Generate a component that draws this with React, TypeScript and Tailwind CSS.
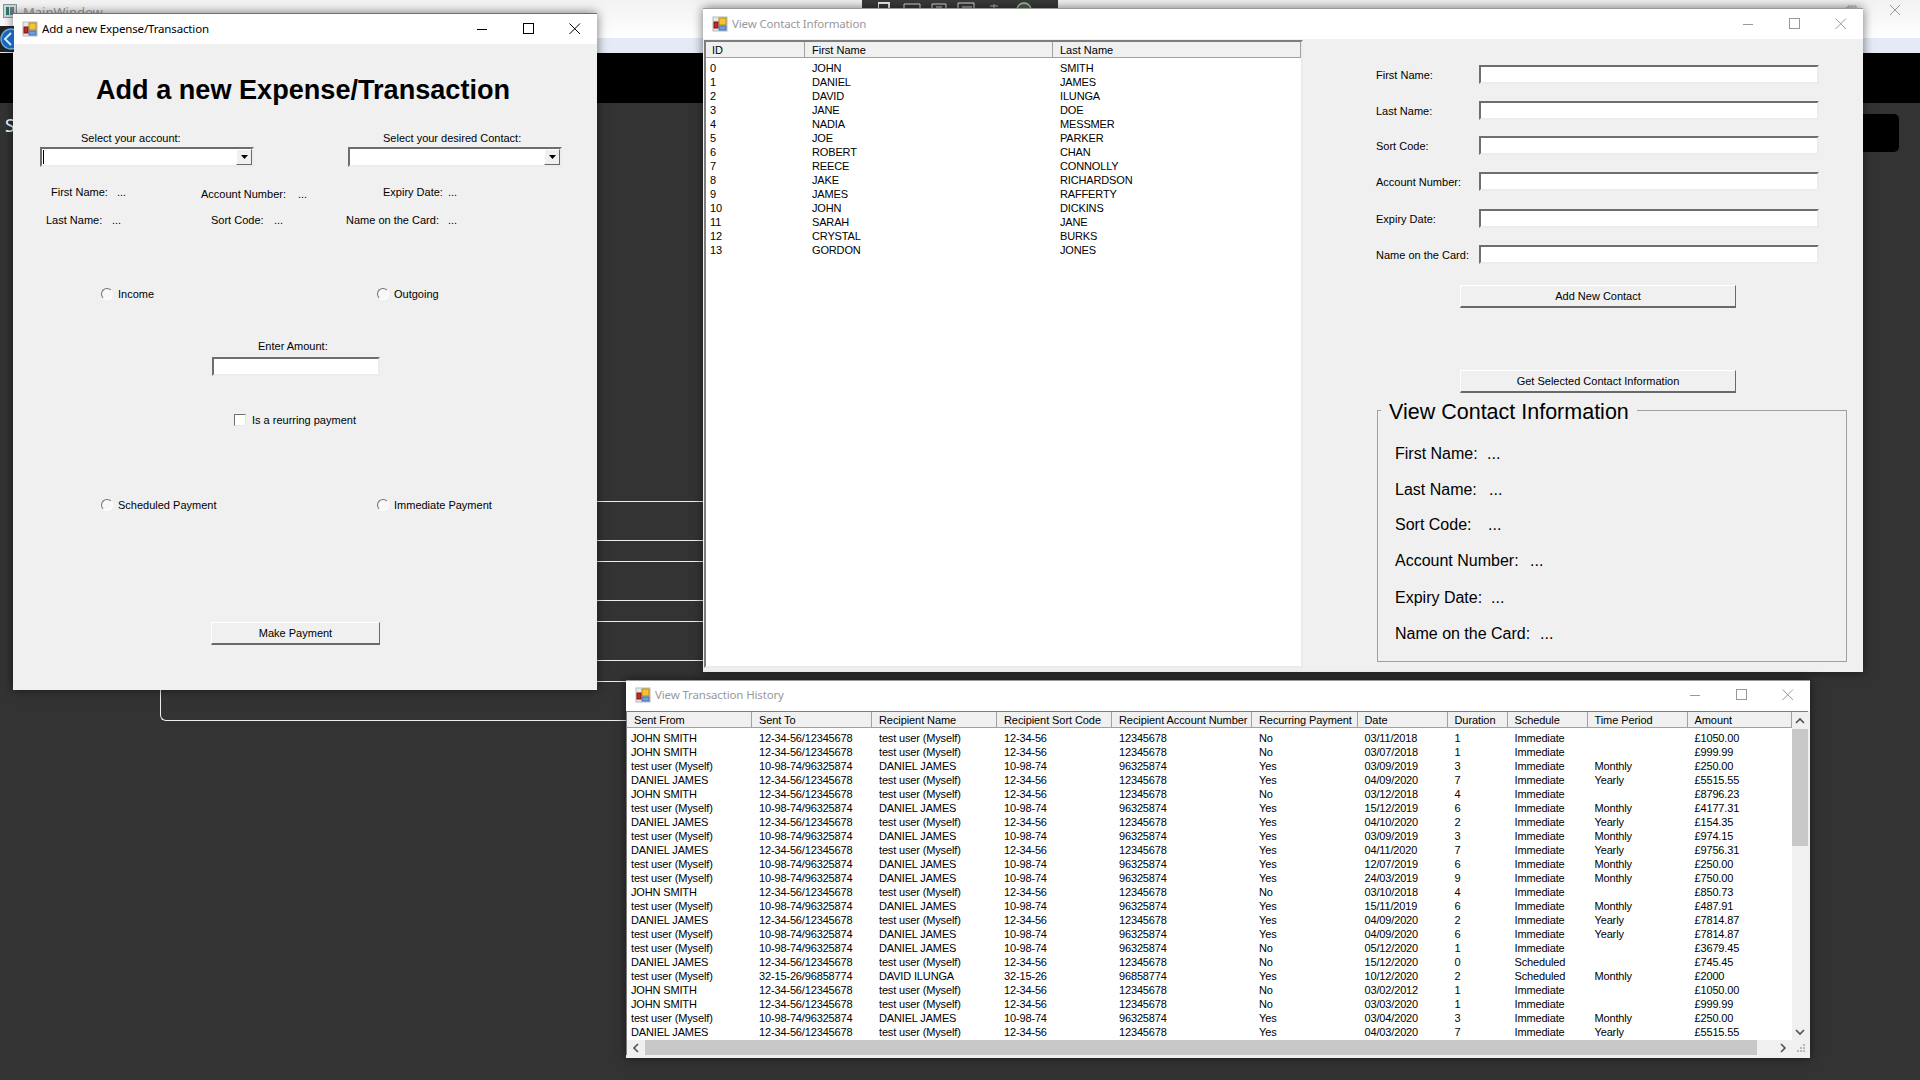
import React from "react";

const Rows: string[][] = [
  ["J", "No", "03/11/2018", "1", "Immediate", "", "£1050.00"],
  ["J", "No", "03/07/2018", "1", "Immediate", "", "£999.99"],
  ["T", "Yes", "03/09/2019", "3", "Immediate", "Monthly", "£250.00"],
  ["D", "Yes", "04/09/2020", "7", "Immediate", "Yearly", "£5515.55"],
  ["J", "No", "03/12/2018", "4", "Immediate", "", "£8796.23"],
  ["T", "Yes", "15/12/2019", "6", "Immediate", "Monthly", "£4177.31"],
  ["D", "Yes", "04/10/2020", "2", "Immediate", "Yearly", "£154.35"],
  ["T", "Yes", "03/09/2019", "3", "Immediate", "Monthly", "£974.15"],
  ["D", "Yes", "04/11/2020", "7", "Immediate", "Yearly", "£9756.31"],
  ["T", "Yes", "12/07/2019", "6", "Immediate", "Monthly", "£250.00"],
  ["T", "Yes", "24/03/2019", "9", "Immediate", "Monthly", "£750.00"],
  ["J", "No", "03/10/2018", "4", "Immediate", "", "£850.73"],
  ["T", "Yes", "15/11/2019", "6", "Immediate", "Monthly", "£487.91"],
  ["D", "Yes", "04/09/2020", "2", "Immediate", "Yearly", "£7814.87"],
  ["T", "Yes", "04/09/2020", "6", "Immediate", "Yearly", "£7814.87"],
  ["T", "No", "05/12/2020", "1", "Immediate", "", "£3679.45"],
  ["D", "No", "15/12/2020", "0", "Scheduled", "", "£745.45"],
  ["I", "Yes", "10/12/2020", "2", "Scheduled", "Monthly", "£2000"],
  ["J", "No", "03/02/2012", "1", "Immediate", "", "£1050.00"],
  ["J", "No", "03/03/2020", "1", "Immediate", "", "£999.99"],
  ["T", "Yes", "03/04/2020", "3", "Immediate", "Monthly", "£250.00"],
  ["D", "Yes", "04/03/2020", "7", "Immediate", "Yearly", "£5515.55"],
];

const lead: Record<string, string[]> = {
  J: ["JOHN SMITH", "12-34-56/12345678", "test user (Myself)", "12-34-56", "12345678"],
  D: ["DANIEL JAMES", "12-34-56/12345678", "test user (Myself)", "12-34-56", "12345678"],
  T: ["test user (Myself)", "10-98-74/96325874", "DANIEL JAMES", "10-98-74", "96325874"],
  I: ["test user (Myself)", "32-15-26/96858774", "DAVID ILUNGA", "32-15-26", "96858774"],
};

const contacts: [string, string, string][] = [
  ["0", "JOHN", "SMITH"], ["1", "DANIEL", "JAMES"], ["2", "DAVID", "ILUNGA"], ["3", "JANE", "DOE"],
  ["4", "NADIA", "MESSMER"], ["5", "JOE", "PARKER"], ["6", "ROBERT", "CHAN"], ["7", "REECE", "CONNOLLY"],
  ["8", "JAKE", "RICHARDSON"], ["9", "JAMES", "RAFFERTY"], ["10", "JOHN", "DICKINS"], ["11", "SARAH", "JANE"],
  ["12", "CRYSTAL", "BURKS"], ["13", "GORDON", "JONES"],
];

const txGrid = "grid grid-cols-[125px_120px_125px_115px_140px_105.5px_90px_60px_80px_100px_104.5px]";
const ctGrid = "grid grid-cols-[99px_248px_248px]";

function AppIcon() {
  return (
    <svg width="16" height="16" viewBox="0 0 16 16" className="shrink-0">
      <rect x="1" y="1" width="14" height="14" fill="#e8e8e8" stroke="#b8b8b8" />
      <rect x="7" y="2" width="7" height="7" fill="#f6c431" stroke="#b98a10" />
      <rect x="2" y="6" width="4" height="6" fill="#c8281e" stroke="#7a1410" />
      <rect x="7" y="10" width="7" height="4" fill="#6f9fe0" stroke="#3f6fb0" />
    </svg>
  );
}

function Caption({ color }: { color: string }) {
  return (
    <div className="ml-auto flex items-center">
      <svg width="46" height="12" viewBox="0 0 46 12" className="shrink-0">
        <line x1="0" y1="6.5" x2="10" y2="6.5" stroke={color} />
      </svg>
      <svg width="46" height="12" viewBox="0 0 46 12" className="shrink-0">
        <rect x="0.5" y="0.5" width="10" height="10" fill="none" stroke={color} />
      </svg>
      <svg width="18" height="12" viewBox="0 0 18 12" className="shrink-0">
        <path d="M0.5 0.5 L11 11 M11 0.5 L0.5 11" fill="none" stroke={color} />
      </svg>
    </div>
  );
}

function Sunken({ className }: { className: string }) {
  return (
    <div className={"h-[19px] bg-white border-2 border-t-[#6e6e6e] border-l-[#6e6e6e] border-r-[#ececec] border-b-[#ececec] " + className} />
  );
}

function Combo({ className, caret }: { className: string; caret?: boolean }) {
  return (
    <div className={"h-[20px] w-[214px] flex bg-white border-2 border-t-[#6e6e6e] border-l-[#6e6e6e] border-r-[#ececec] border-b-[#ececec] " + className}>
      <div className="flex-1 pl-[1px] pt-[1px]">{caret && <div className="w-px h-[14px] bg-black" />}</div>
      <div className="w-[16px] bg-[#f0f0f0] flex items-center justify-center border border-t-white border-l-white border-r-[#696969] border-b-[#696969]">
        <svg width="7" height="4" viewBox="0 0 7 4"><path d="M0 0 H7 L3.5 4 Z" fill="#000" /></svg>
      </div>
    </div>
  );
}

function Btn({ className, children }: { className: string; children: React.ReactNode }) {
  return (
    <div className={"h-[23px] bg-[#f0f0f0] flex items-center justify-center text-black border-t border-l border-t-white border-l-white border-r border-r-[#696969] border-b-2 border-b-[#696969] " + className}>
      {children}
    </div>
  );
}

function Radio({ label, className }: { label: string; className: string }) {
  return (
    <div className={"flex items-center " + className}>
      <span className="w-[12px] h-[12px] rounded-full bg-[#f8f8f8] border border-t-[#707070] border-l-[#707070] border-r-white border-b-white -mt-[1px]" />
      <span className="ml-[5px]">{label}</span>
    </div>
  );
}

function Win({ className, title, active, barClass, children }: { className: string; title: string; active?: boolean; barClass?: string; children: React.ReactNode }) {
  const color = active ? "#000000" : "#999999";
  return (
    <div className={"absolute flex flex-col bg-[#f0f0f0] shadow-[0_0_10px_rgba(0,0,0,0.55)] " + className}>
      <div className={"h-[31px] shrink-0 bg-white flex items-center pl-[9px] pr-[10px] border-t " + (active ? "border-t-[#6f6f6f] " : "border-t-[#9a9a9a] ") + (barClass ?? "")}>
        <AppIcon />
        <span className={"ml-[4px] font-['Noto_Sans',sans-serif] text-[11.5px] tracking-[-0.15px] " + (active ? "text-black" : "text-[#999999]")}>{title}</span>
        <Caption color={color} />
      </div>
      {children}
    </div>
  );
}

function Chevron({ d }: { d: string }) {
  return (
    <svg width="10" height="10" viewBox="0 0 10 10"><path d={d} fill="none" stroke="#505050" strokeWidth="1.6" /></svg>
  );
}

export default function App() {
  return (
    <div className="relative w-[1920px] h-[1080px] overflow-hidden flex flex-col bg-[#333333] font-['Liberation_Sans',Arial,sans-serif] text-[11px] leading-[14px] text-black">
      {/* main window behind */}
      <div className="h-[38px] bg-gradient-to-b from-[#f2f2f2] to-white flex items-start relative shrink-0">
        <svg width="14" height="14" viewBox="0 0 14 14" className="ml-[3px] mt-[4px]">
          <rect x="0.5" y="0.5" width="13" height="13" fill="#cdd6da" stroke="#8a9296" />
          <rect x="3" y="3" width="3" height="8" fill="#2c7a6a" />
          <rect x="7" y="3" width="4" height="8" fill="#6a7a88" />
        </svg>
        <span className="ml-[6px] mt-[5px] text-[13px] leading-[14px] text-[#9a9a9a] font-['Noto_Sans',sans-serif]">MainWindow</span>
        <div className="absolute left-[862px] top-0 w-[196px] h-[8px] bg-[#3a3a3a] flex items-start pl-[16px] overflow-hidden">
          <svg width="170" height="8" viewBox="0 0 170 8">
            <path d="M0 3 H11 V8 M0 3 V8" fill="none" stroke="#eee" strokeWidth="2" />
            <path d="M26 4 H42 V8 M26 4 V8 M54 4 H68 V8 M54 4 V8 M58 7 H64 M80 3 H96 M84 7 H94 M80 3 V8 M96 3 V8" fill="none" stroke="#ddd" />
            <path d="M112 6 H120 M116 4 V8" fill="none" stroke="#bbb" />
            <circle cx="146" cy="10" r="7" fill="#5a5a5a" stroke="#9ccf9c" strokeWidth="1.5" />
          </svg>
        </div>
        <svg width="12" height="12" viewBox="0 0 12 12" className="absolute left-[1845px] top-[5px]">
          <path d="M3 3 V1 H11 V9 H9" fill="none" stroke="#aaa" />
          <rect x="1" y="3" width="8" height="8" fill="none" stroke="#aaa" />
        </svg>
        <svg width="12" height="12" viewBox="0 0 12 12" className="absolute left-[1889px] top-[4px]">
          <path d="M1 1 L11 11 M11 1 L1 11" fill="none" stroke="#999" />
        </svg>
        <svg width="14" height="26" viewBox="0 0 14 26" className="absolute left-0 top-[26px] z-10">
          <rect width="14" height="26" fill="#222" />
          <circle cx="11" cy="13" r="10" fill="#1765b8" stroke="#6aa8e0" strokeWidth="1.5" />
          <path d="M11 7 L5 13 L11 19" fill="none" stroke="#cfe6ff" strokeWidth="2" />
        </svg>
      </div>
      <div className="h-[15px] shrink-0 bg-[#e4eaf6]" />
      <div className="h-[50px] shrink-0 bg-black" />
      <div className="flex-1 flex flex-col">
        <div className="flex items-start justify-between mt-[10px] pl-[5px] pr-[21px]">
          <span className="text-white text-[18px] leading-[24px] font-['Noto_Sans',sans-serif]">S</span>
          <div className="w-[700px] h-[38px] mt-px bg-black rounded-[5px]" />
        </div>
        <div className="ml-[160px] mt-[349px] w-[543px] border-l border-b border-[#eeeeee] rounded-bl-[6px] flex flex-col">
          <div className="h-[39px] border-t border-[#eeeeee]" />
          <div className="h-[21px] border-t border-[#eeeeee]" />
          <div className="h-[39px] border-t border-[#eeeeee]" />
          <div className="h-[21px] border-t border-[#eeeeee]" />
          <div className="h-[39px] border-t border-[#eeeeee]" />
          <div className="h-[21px] border-t border-[#eeeeee]" />
          <div className="h-[39px] border-t border-[#eeeeee]" />
        </div>
      </div>

      {/* View Contact Information */}
      <Win className="left-[703px] top-[8px] w-[1160px] h-[664px]" title="View Contact Information">
        <div className="flex-1 flex">
          <div className="ml-[1px] mt-px w-[599px] h-[628px] bg-white border-2 border-t-[#7d7d7d] border-l-[#7d7d7d] border-r-[#ececec] border-b-[#ececec]">
            <div className={ctGrid + " h-[16px] bg-[#f0f0f0]"}>
              {["ID", "First Name", "Last Name"].map((h, i) => (
                <div key={h} className={"pt-px border-r border-b border-[#a0a0a0] " + (i === 0 ? "pl-[6px]" : "pl-[7px]")}>{h}</div>
              ))}
            </div>
            <div className="pt-[3px] tracking-[-0.15px]">
              {contacts.map((r) => (
                <div key={r[0]} className={ctGrid + " h-[14px]"}>
                  <div className="pl-[4px]">{r[0]}</div>
                  <div className="pl-[7px]">{r[1]}</div>
                  <div className="pl-[7px]">{r[2]}</div>
                </div>
              ))}
            </div>
          </div>
          <div className="flex-1 flex flex-col">
            <div className="h-[26px]" />
            {[
              ["First Name:", "mb-[17px]"],
              ["Last Name:", "mb-[16px]"],
              ["Sort Code:", "mb-[17px]"],
              ["Account Number:", "mb-[18px]"],
              ["Expiry Date:", "mb-[17px]"],
              ["Name on the Card:", "mb-[21px]"],
            ].map(([l, m]) => (
              <div key={l} className={"flex items-center h-[19px] pl-[73px] " + m}>
                <span className="w-[103px]">{l}</span>
                <Sunken className="w-[340px]" />
              </div>
            ))}
            <Btn className="ml-[157px] w-[276px]">Add New Contact</Btn>
            <Btn className="ml-[157px] w-[276px] mt-[62px]">Get Selected Contact Information</Btn>
            <div className="relative ml-[74px] mt-[17px] w-[470px] h-[252px] border border-[#a0a0a0] pt-[33px] pl-[17px] text-[16px] leading-[20px]">
              <span className="absolute left-[3px] -top-[11px] bg-[#f0f0f0] px-[8px] text-[21.5px] leading-[24px] text-black">View Contact Information</span>
              <div className="flex h-[20px] mb-[16px]"><span className="w-[92px]">First Name:</span><span>...</span></div>
              <div className="flex h-[20px] mb-[15px]"><span className="w-[94px]">Last Name:</span><span>...</span></div>
              <div className="flex h-[20px] mb-[16px]"><span className="w-[93px]">Sort Code:</span><span>...</span></div>
              <div className="flex h-[20px] mb-[17px]"><span className="w-[135px]">Account Number:</span><span>...</span></div>
              <div className="flex h-[20px] mb-[16px]"><span className="w-[96px]">Expiry Date:</span><span>...</span></div>
              <div className="flex h-[20px]"><span className="w-[145px]">Name on the Card:</span><span>...</span></div>
            </div>
          </div>
        </div>
      </Win>

      {/* View Transaction History */}
      <Win className="left-[626px] top-[680px] w-[1184px] h-[378px]" title="View Transaction History" barClass="pb-[2px]">
        <div className="mr-[2px] h-[344px] bg-white border-t border-l border-t-[#7d7d7d] border-l-[#7d7d7d] grid grid-cols-[1165px_16px] grid-rows-[1fr_15px]">
          <div className="overflow-hidden">
            <div className={txGrid + " h-[16px] bg-[#f0f0f0]"}>
              {["Sent From", "Sent To", "Recipient Name", "Recipient Sort Code", "Recipient Account Number", "Recurring Payment", "Date", "Duration", "Schedule", "Time Period", "Amount"].map((h) => (
                <div key={h} className="pt-px pl-[7px] border-r border-b border-[#a0a0a0] whitespace-nowrap overflow-hidden tracking-[-0.08px]">{h}</div>
              ))}
            </div>
            <div className="pt-[3px] tracking-[-0.15px]">
              {Rows.map((r, i) => {
                const cells = [...lead[r[0]], ...r.slice(1)];
                return (
                  <div key={i} className={txGrid + " h-[14px]"}>
                    {cells.map((c, j) => (
                      <div key={j} className={"whitespace-nowrap " + (j === 0 ? "pl-[4px]" : "pl-[7px]")}>{c}</div>
                    ))}
                  </div>
                );
              })}
            </div>
          </div>
          <div className="bg-[#f0f0f0] flex flex-col items-center">
            <div className="h-[17px] flex items-center"><Chevron d="M1 7 L5 3 L9 7" /></div>
            <div className="w-full h-[117px] bg-[#c8c8c8]" />
            <div className="mt-auto h-[17px] flex items-center"><Chevron d="M1 3 L5 7 L9 3" /></div>
          </div>
          <div className="bg-[#f0f0f0] flex items-center">
            <div className="w-[18px] flex justify-center"><Chevron d="M7 1 L3 5 L7 9" /></div>
            <div className="w-[1112px] h-full bg-[#c8c8c8]" />
            <div className="flex-1 flex justify-end pr-[4px]"><Chevron d="M3 1 L7 5 L3 9" /></div>
          </div>
          <div className="bg-[#f0f0f0] flex items-end justify-end p-[2px]">
            <svg width="9" height="9" viewBox="0 0 9 9" fill="#b8b8b8">
              <rect x="6" y="0" width="2" height="2" /><rect x="3" y="3" width="2" height="2" /><rect x="6" y="3" width="2" height="2" />
              <rect x="0" y="6" width="2" height="2" /><rect x="3" y="6" width="2" height="2" /><rect x="6" y="6" width="2" height="2" />
            </svg>
          </div>
        </div>
      </Win>

      {/* Add a new Expense/Transaction */}
      <Win className="left-[13px] top-[13px] w-[584px] h-[677px]" title="Add a new Expense/Transaction" active>
        <div className="flex flex-col">
          <h1 className="mt-[30px] ml-[83px] h-[32px] text-[27.1px] leading-[32px] font-bold text-black whitespace-nowrap">Add a new Expense/Transaction</h1>
          <div className="flex mt-[25px] pl-[68px]">
            <span className="w-[302px]">Select your account:</span>
            <span>Select your desired Contact:</span>
          </div>
          <div className="flex mt-[2px]">
            <Combo className="ml-[27px]" caret />
            <Combo className="ml-[94px]" />
          </div>
          <div className="flex items-start mt-[18px] pl-[38px] h-[16px]">
            <span className="w-[66px]">First Name:</span>
            <span className="w-[84px]">...</span>
            <span className="w-[97px] mt-[2px]">Account Number:</span>
            <span className="w-[85px] mt-[2px]">...</span>
            <span className="w-[65px]">Expiry Date:</span>
            <span>...</span>
          </div>
          <div className="flex items-start mt-[12px] pl-[33px] h-[14px]">
            <span className="w-[66px]">Last Name:</span>
            <span className="w-[99px]">...</span>
            <span className="w-[63px]">Sort Code:</span>
            <span className="w-[72px]">...</span>
            <span className="w-[102px]">Name on the Card:</span>
            <span>...</span>
          </div>
          <div className="flex mt-[60px] pl-[88px]">
            <Radio label="Income" className="w-[276px]" />
            <Radio label="Outgoing" className="" />
          </div>
          <div className="mt-[38px] pl-[245px]">Enter Amount:</div>
          <Sunken className="ml-[199px] mt-[4px] w-[168px]" />
          <div className="flex items-center mt-[37px] ml-[221px]">
            <span className="w-[12px] h-[12px] bg-white border border-t-[#707070] border-l-[#707070] border-r-[#e8e8e8] border-b-[#e8e8e8] -mt-[1px]" />
            <span className="ml-[6px]">Is a reurring payment</span>
          </div>
          <div className="flex mt-[71px] pl-[88px]">
            <Radio label="Scheduled Payment" className="w-[276px]" />
            <Radio label="Immediate Payment" className="" />
          </div>
          <Btn className="ml-[198px] mt-[110px] w-[169px]">Make Payment</Btn>
        </div>
      </Win>
    </div>
  );
}
